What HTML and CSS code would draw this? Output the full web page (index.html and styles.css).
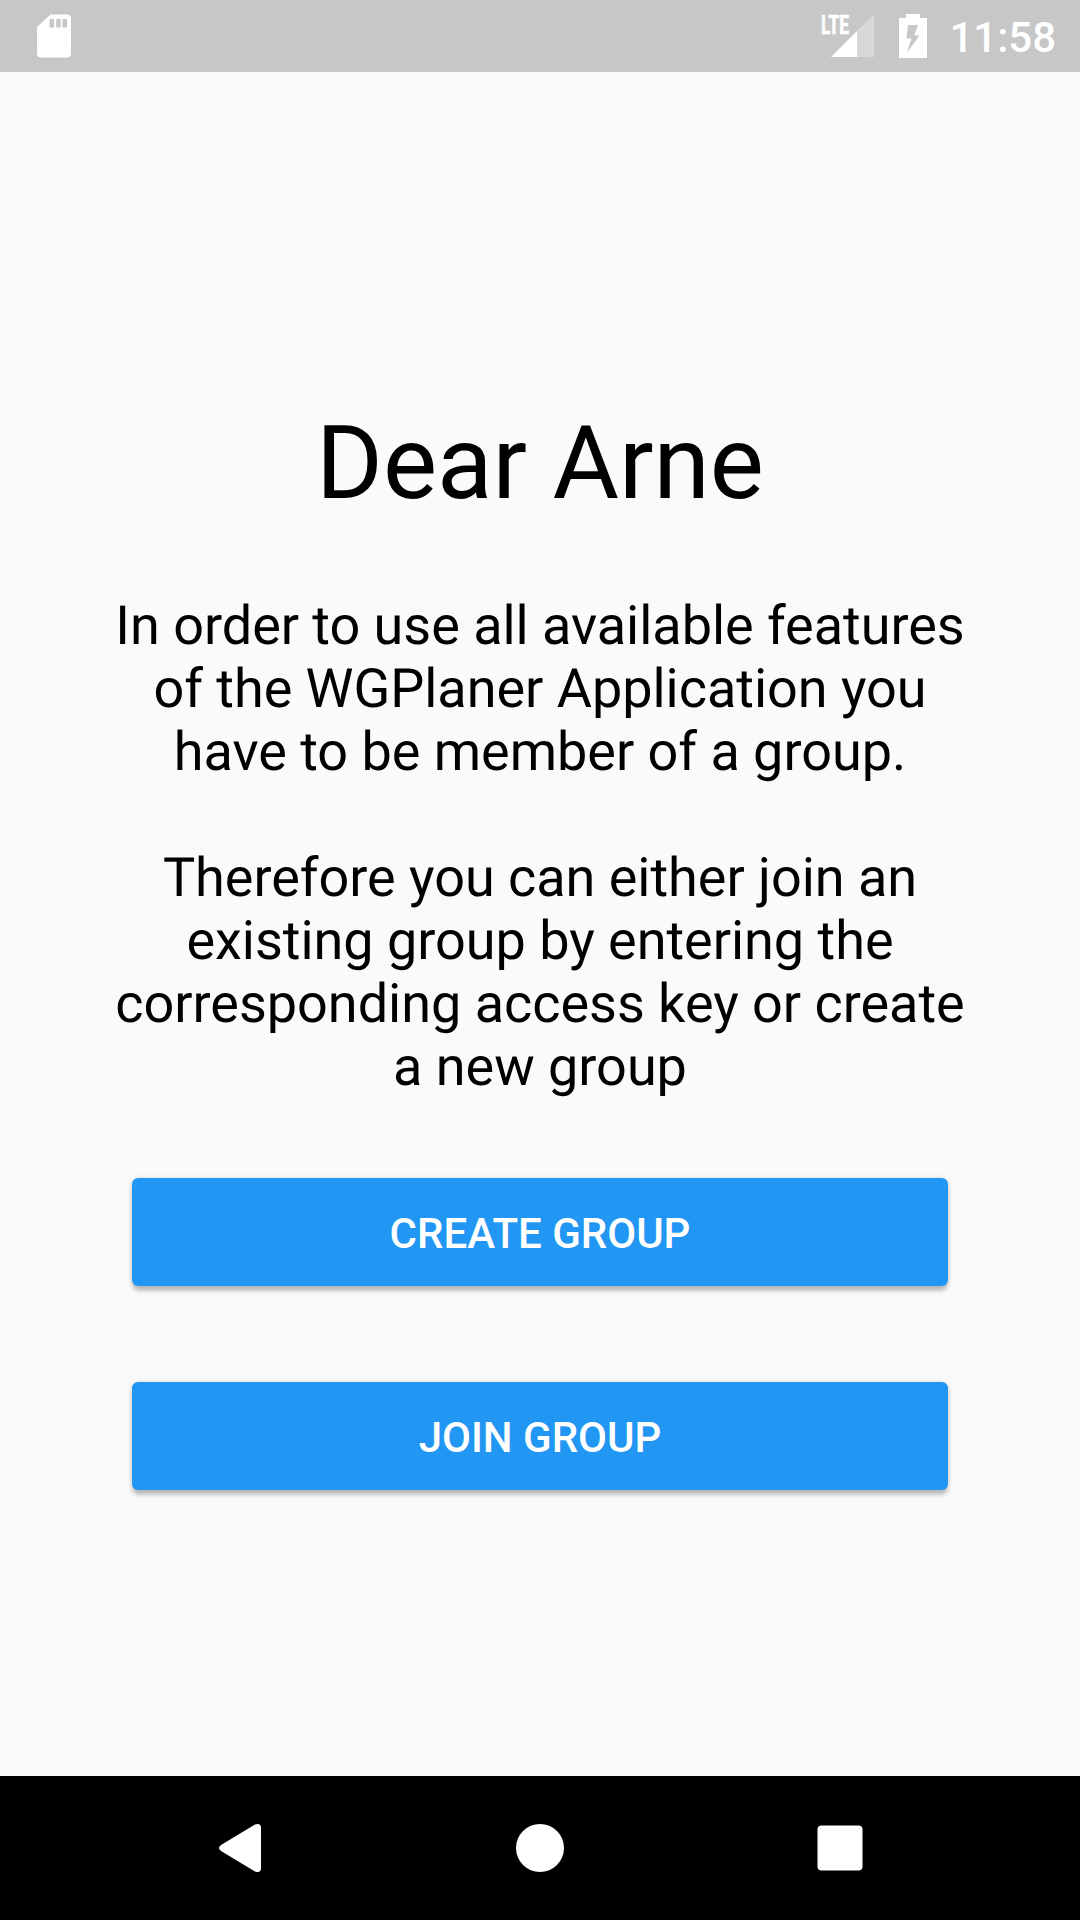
FILE: index.html
```html
<!DOCTYPE html>
<html lang="en">
<head>
<meta charset="utf-8">
<title>WGPlaner</title>
<link rel="stylesheet" href="styles.css">
</head>
<body>
<div class="screen">
  <header class="status-bar">
    <svg class="sd-icon" width="36" height="44" viewBox="0 0 36 44"><path fill="#fff" fill-rule="evenodd" d="M14.500 .5H31Q35 .5 35 4.500V39.500Q35 43.500 31 43.500H5Q1 43.500 1 39.500V13ZM13.500 5V13.500H18V5ZM20.200 5V13.500H24.700V5ZM26.500 5V13.500H31V5Z"/></svg>
    <div class="status-right">
      <svg class="signal-icon" width="54" height="60" viewBox="0 -8 54 60"><path fill="#fff" fill-opacity=".3" d="M54 0V43H11Z"/><path fill="#fff" d="M37 17V43H11Z"/><text class="network" x="1" y="19.500" textLength="28" lengthAdjust="spacingAndGlyphs">LTE</text></svg>
      <svg class="battery-icon" width="28" height="44" viewBox="0 0 28 44"><path fill="#fff" fill-rule="evenodd" d="M7 0H21V4H28V44H0V4H7ZM9 11L7.500 24.500H12.500L7.700 39L20.500 21.500H15.200L19 11Z"/></svg>
      <span class="clock">11:58</span>
    </div>
  </header>
  <main class="content">
    <h1 class="title">Dear Arne</h1>
    <p class="message">In order to use all available features<br>of the WGPlaner Application you<br>have to be member of a group.</p>
    <p class="message second">Therefore you can either join an<br>existing group by entering the<br>corresponding access key or create<br>a new group</p>
    <button class="button">CREATE GROUP</button>
    <button class="button">JOIN GROUP</button>
  </main>
  <nav class="nav-bar">
    <svg width="300" height="144" viewBox="0 0 300 144"><path fill="#fff" d="M131 69Q127 72 131 75L165 95.500Q171 97.500 171 92V52Q171 46.500 165 48.500Z"/></svg>
    <svg width="300" height="144" viewBox="0 0 300 144"><circle cx="150" cy="72" r="24" fill="#fff"/></svg>
    <svg width="300" height="144" viewBox="0 0 300 144"><rect x="127.500" y="49.500" width="45" height="45" rx="4" fill="#fff"/></svg>
  </nav>
</div>
</body>
</html>
```
FILE: styles.css
```css
* { box-sizing: border-box; }
body { margin: 0; font-family: Roboto, sans-serif; }
.screen { width: 1080px; height: 1920px; display: flex; flex-direction: column; background: #fafafa; }
.status-bar { height: 72px; background: #c7c7c7; display: flex; justify-content: space-between; padding: 0 24px 0 36px; align-items: center; }
.status-right { display: flex; align-items: center; }
.signal-icon { margin-right: 25px; overflow: visible; }
.battery-icon { margin-right: 22px; }
.network { font: 700 26px Roboto, sans-serif; fill: #fff; stroke: #fff; stroke-width: .7px; }
.clock { color: #fff; font-size: 42px; font-weight: 500; padding-top: 2px; }
.content { flex: 1; display: flex; flex-direction: column; align-items: center; padding-top: 331px; }
.title { margin: 0 0 72px; font-size: 102px; font-weight: 400; line-height: 120px; }
.message { margin: 0; font-size: 54px; line-height: 63px; letter-spacing: -.03px; text-align: center; white-space: nowrap; text-rendering: geometricPrecision; }
.second { margin: 63px 0 79px; }
.button { width: 816px; height: 108px; margin: 0 0 96px; padding: 2px 0 0; border: 0; border-radius: 6px; background: #2196f3; color: #fff; font: 500 42px Roboto, sans-serif; box-shadow: 0 6px 4px -1px rgba(0,0,0,.2), 0 1px 6px rgba(0,0,0,.16); }
.nav-bar { height: 144px; background: #000; display: flex; justify-content: center; }
```
